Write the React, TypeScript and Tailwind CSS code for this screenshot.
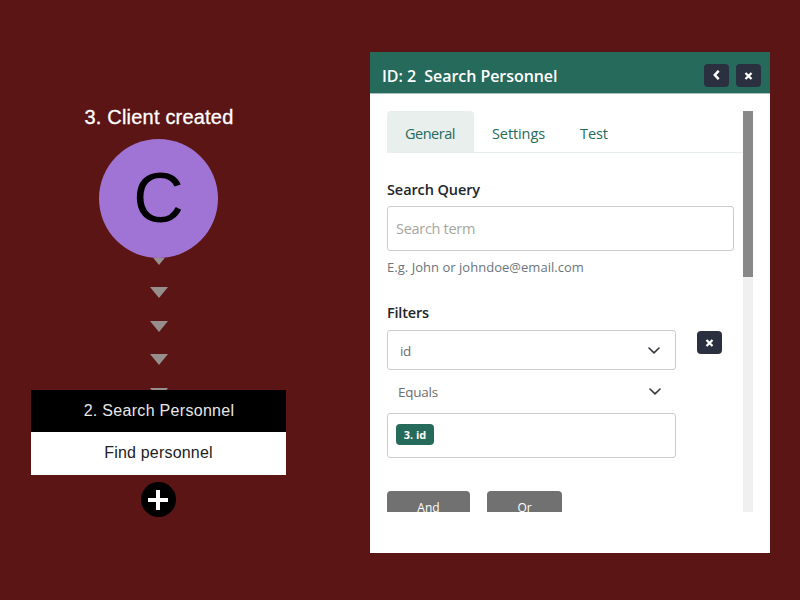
import type { ReactNode } from "react";

function Triangle({ className = "" }: { className?: string }) {
  return (
    <svg className={`block h-[11px] w-[18px] shrink-0 ${className}`} viewBox="0 0 18 11">
      <path d="M0 0H18L9 11Z" fill="#968f8e" />
    </svg>
  );
}

function Chevron() {
  return (
    <svg className="block h-[7px] w-3" viewBox="0 0 12 7" fill="none">
      <path d="M1 1L6 5.8L11 1" stroke="#343a40" strokeWidth="1.6" strokeLinecap="round" strokeLinejoin="round" />
    </svg>
  );
}

function IconButton({ className = "", children }: { className?: string; children: ReactNode }) {
  return (
    <button className={`flex h-[23px] w-[25px] items-center justify-center rounded bg-[#2b3040] ${className}`}>
      {children}
    </button>
  );
}

function Cross() {
  return (
    <svg className="mt-px block h-2 w-[9px]" viewBox="0 0 9 8">
      <path d="M1.5 1L7.5 7M7.5 1L1.5 7" stroke="#fff" strokeWidth="2.3" />
    </svg>
  );
}

function Flow() {
  return (
    <section className="ml-[31px] flex w-[255px] shrink-0 flex-col items-center pt-[105px] font-['Liberation_Sans',Arial,sans-serif]">
      <h2 className="h-6 pl-px text-[20px] leading-6 font-normal tracking-[0.2px] whitespace-pre text-white [-webkit-text-stroke:0.3px_white]">
        3. Client created
      </h2>
      <div className="z-10 mt-[9.5px] flex size-[119px] items-center justify-center rounded-full bg-[#a074d4] text-[70px] leading-none text-black">
        <span className="-mt-px">C</span>
      </div>
      <div className="flex h-[132.5px] flex-col items-center gap-[22.4px] overflow-hidden">
        <Triangle className="-mt-[3.5px]" />
        <Triangle />
        <Triangle />
        <Triangle />
        <Triangle />
      </div>
      <div className="w-[255px] text-center text-[16px]">
        <div className="h-[42px] bg-black pl-px leading-[41px] tracking-[0.3px] whitespace-pre text-[#e8e8e8]">2. Search Personnel</div>
        <div className="h-[43px] bg-white leading-[42px] tracking-[0.2px] text-[#222]">Find personnel</div>
      </div>
      <button className="mt-[6.5px] flex size-[35px] items-center justify-center rounded-full bg-black">
        <svg className="mt-px -ml-px block size-5" viewBox="0 0 20 20">
          <path d="M10 0V20M0 10H20" stroke="#fff" strokeWidth="4" />
        </svg>
      </button>
    </section>
  );
}

function Panel() {
  return (
    <section className="mt-[52px] ml-[84px] flex h-[501px] w-[400px] shrink-0 flex-col bg-white">
      <header className="flex h-[42px] items-center border-b border-[#a5c0ba] bg-[#266a5c] pt-[5px] pr-[9px] pl-[12px]">
        <h1 className="flex-1 pt-px text-[16px] leading-6 font-semibold tracking-[-0.05px] whitespace-pre text-white">ID: 2  Search Personnel</h1>
        <IconButton className="mr-[7px]">
          <svg className="-ml-px block h-2.5 w-[7px]" viewBox="0 0 7 10" fill="none">
            <path d="M5.7 0.8L1.8 5L5.7 9.2" stroke="#fff" strokeWidth="2.5" />
          </svg>
        </IconButton>
        <IconButton>
          <Cross />
        </IconButton>
      </header>

      <div className="mt-[17px] ml-[17px] flex h-[401px] w-[366px] overflow-hidden">
        <div className="flex w-[356px] flex-col">
          <nav className="flex h-[42px] shrink-0 border-b border-[#e9efed] text-[14.5px] leading-[46px] text-[#266a5c]">
            <span className="w-[87px] rounded-t bg-[#e9efed] pl-[18px] tracking-[-0.5px]">General</span>
            <span className="w-[89px] pl-[18px] tracking-[-0.1px]">Settings</span>
            <span className="pl-[17px] tracking-[-0.1px]">Test</span>
          </nav>

          <label className="mt-[26px] h-[22px] text-[14.5px] leading-[22px] font-semibold tracking-[-0.1px] text-[#212529]">Search Query</label>
          <div className="mt-[5px] flex h-[45px] w-[347px] shrink-0 items-center rounded-[3px] border border-[#ccc] pl-2 text-[14.5px] tracking-[-0.3px] text-[#a6a6a0]">
            Search term
          </div>
          <p className="mt-[7px] h-[18px] shrink-0 text-[13px] leading-[18px] tracking-[0.03px] whitespace-pre text-[#6c757d]">E.g. John or johndoe@email.com</p>

          <label className="mt-[26px] h-[22px] text-[14.5px] leading-[22px] font-semibold tracking-[-0.2px] text-[#212529]">Filters</label>
          <div className="mt-[6px] flex shrink-0 items-start">
            <div className="w-[289px]">
              <div className="flex h-10 items-center justify-between rounded-[3px] border border-[#ccc] pr-[15px] pl-3 text-[13.5px] tracking-[-0.3px] text-[#6e6e6e]">
                <span className="mt-[3px]">id</span>
                <Chevron />
              </div>
              <div className="flex h-[43px] items-center justify-between pr-[15px] pl-[11px] text-[13.5px] tracking-[-0.25px] text-[#6e6e6e]">
                <span className="mt-px">Equals</span>
                <Chevron />
              </div>
              <div className="flex h-[45px] items-center rounded-[3px] border border-[#ccc] pl-2">
                <span className="-mt-[2px] flex h-[21px] w-[38px] items-center justify-center rounded bg-[#266a5c] pt-px text-[11px] font-bold text-white">3. id</span>
              </div>
            </div>
            <IconButton className="mt-px ml-[21px]">
              <Cross />
            </IconButton>
          </div>

          <div className="mt-[33px] flex shrink-0 gap-[17px] text-[12px] leading-[33px] text-white">
            <button className="h-[33px] w-[83px] rounded-t bg-[#717171]">And</button>
            <button className="h-[33px] w-[75px] rounded-t bg-[#717171]">Or</button>
          </div>
        </div>
        <div className="h-full w-2.5 bg-[#f0f0f0]">
          <div className="h-[166px] bg-[#888]" />
        </div>
      </div>
    </section>
  );
}

export default function App() {
  return (
    <main className="flex h-[600px] w-[800px] overflow-hidden bg-[#5c1515] font-['Open_Sans','Noto_Sans',sans-serif]">
      <Flow />
      <Panel />
    </main>
  );
}
